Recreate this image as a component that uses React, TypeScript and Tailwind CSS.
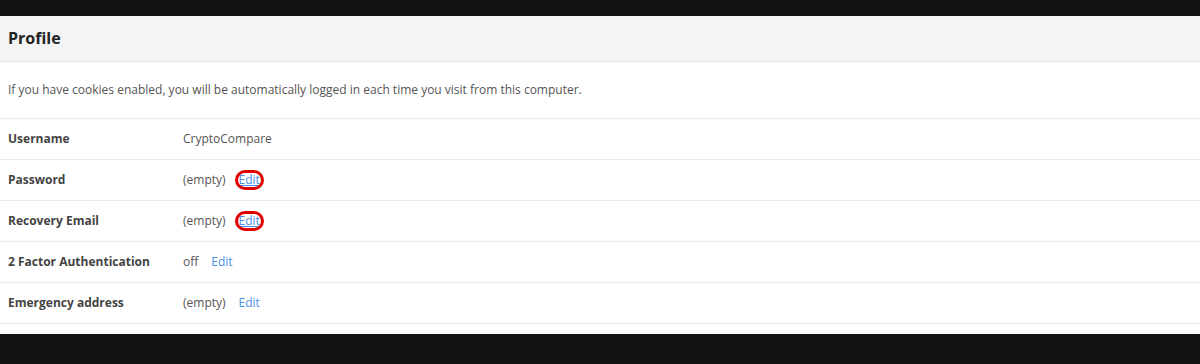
import React from 'react';

interface Row {
  label: string;
  value: string;
  edit?: boolean;
  marked?: boolean;
}

const rows: Row[] = [
  { label: 'Username', value: 'CryptoCompare' },
  { label: 'Password', value: '(empty)', edit: true, marked: true },
  { label: 'Recovery Email', value: '(empty)', edit: true, marked: true },
  { label: '2 Factor Authentication', value: 'off', edit: true },
  { label: 'Emergency address', value: '(empty)', edit: true },
];

const EditLink: React.FC<{ marked?: boolean }> = ({ marked }) => (
  <span className="relative ml-[13px] inline-block">
    <a href="#" className={`text-[#4a8fe7] ${marked ? 'underline' : 'no-underline'}`}>
      Edit
    </a>
    {marked && (
      <span className="absolute -left-[4px] -right-[4px] -top-[2px] -bottom-[2px] rounded-[10px] border-[3px] border-[#e00000]" />
    )}
  </span>
);

export default function App() {
  return (
    <div className="w-[1200px] h-[364px] bg-[#111111] flex flex-col font-['Open_Sans',sans-serif]">
      <div className="h-4 shrink-0" />
      <div className="bg-white flex flex-col pb-[10px]">
        {/* header */}
        <div className="h-[46px] bg-[#f4f4f4] border-b border-[#e8e8e8] flex items-center px-2">
          <h1 className="text-base font-bold text-[#222] leading-none -mt-[2px]">Profile</h1>
        </div>

        <div className="h-[57px] border-b border-[#ececec] flex items-center px-2">
          <p className="text-xs text-[#555]">
            If you have cookies enabled, you will be automatically logged in each time you visit from this computer.
          </p>
        </div>

        {rows.map((row) => (
          <div key={row.label} className="h-[41px] border-b border-[#ececec] grid grid-cols-[183px_1fr] items-center text-xs">
            <div className="pl-2 font-bold text-[#444]">{row.label}</div>
            <div className="text-[#555]">
              {row.value}
              {row.edit && <EditLink marked={row.marked} />}
            </div>
          </div>
        ))}
      </div>
    </div>
  );
}
